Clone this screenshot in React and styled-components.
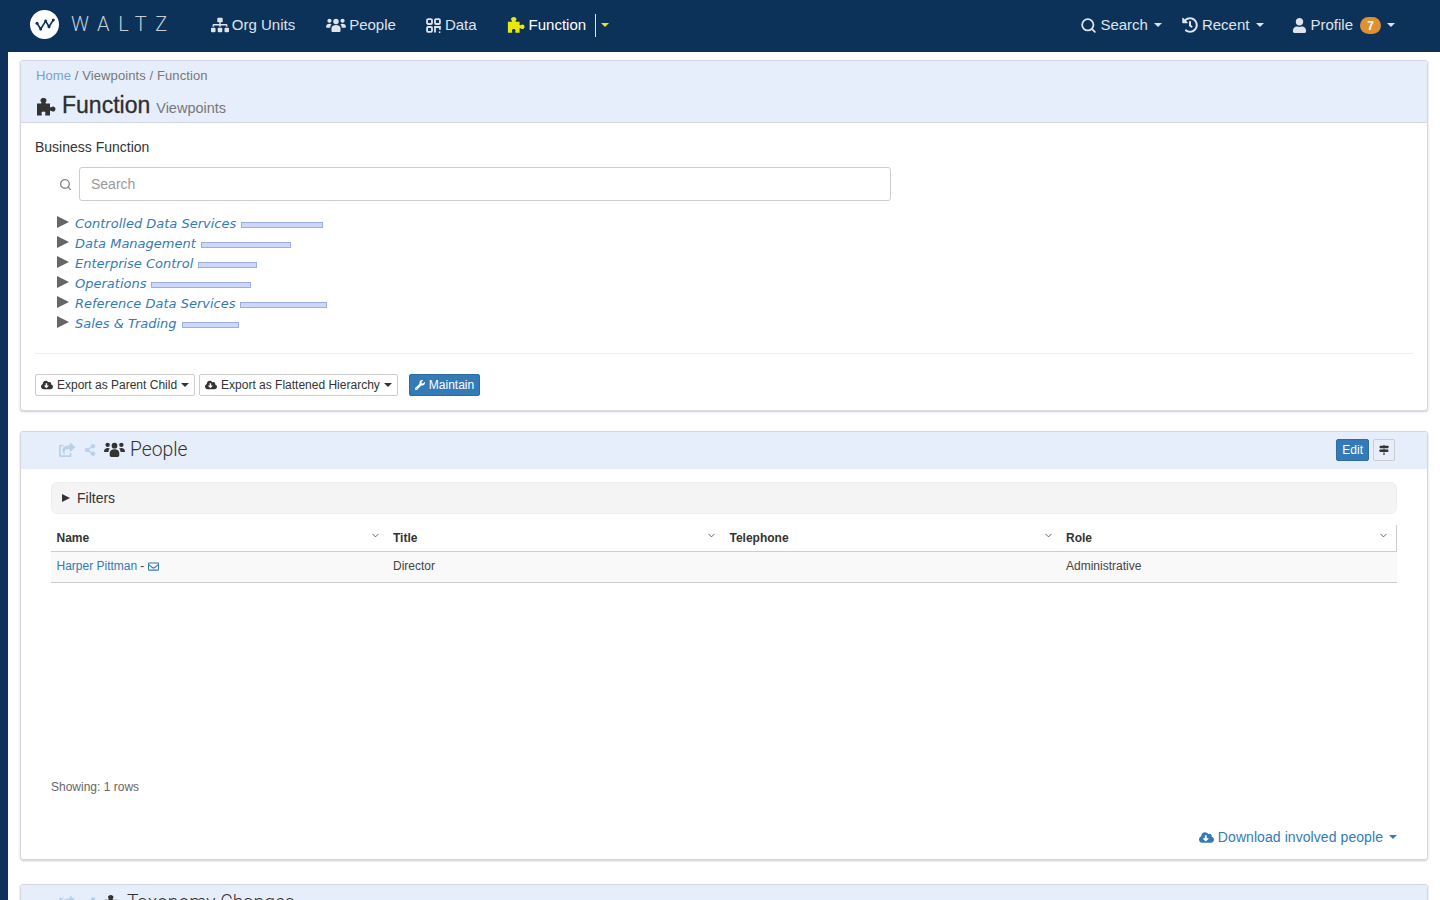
import React from "react";
import styled, { createGlobalStyle } from "styled-components";
import {
  FaSitemap,
  FaHistory,
  FaUser,
  FaCloudDownloadAlt,
  FaWrench,
  FaShareSquare,
  FaShareAlt,
  FaRegEnvelope,
  FaMapSigns,
} from "react-icons/fa";
import { FiSearch, FiChevronDown } from "react-icons/fi";

const GlobalStyle = createGlobalStyle`
  html, body {
    margin: 0;
    padding: 0;
    height: 100%;
    overflow: hidden;
  }
  body {
    font-family: "Liberation Sans", Arial, sans-serif;
    font-size: 14px;
    line-height: 20px;
    color: #333;
  }
  * {
    box-sizing: border-box;
  }
`;

const Page = styled.div`
  width: 1440px;
  height: 900px;
  overflow: hidden;
  background: #0d3259;
  display: flex;
  flex-direction: column;
`;

const Nav = styled.nav`
  height: 52px;
  flex: none;
  display: flex;
  align-items: center;
  justify-content: space-between;
  padding: 0 45px 2px 30px;
  color: #e6ebf0;
`;

const NavGroup = styled.div`
  display: flex;
  align-items: center;
`;

const Logo = styled.div`
  display: flex;
  align-items: center;
  gap: 12px;
  margin: -2px 35px 0 0;
`;

const LogoMark = styled.div`
  width: 29px;
  height: 29px;
  border-radius: 50%;
  background: #fff;
  display: flex;
`;

const LogoText = styled.span`
  font-family: Roboto, "Liberation Sans", sans-serif;
  font-size: 20px;
  font-weight: 300;
  letter-spacing: 8.6px;
  color: #c6ced6;
`;

const NavItem = styled.a`
  display: flex;
  align-items: center;
  gap: ${(p) => p.$gap || 3}px;
  margin-right: ${(p) => p.$after || 0}px;
  font-size: 15px;
  white-space: nowrap;
  color: ${(p) => (p.$active ? "#fff" : "#dfe4ea")};
  svg {
    color: ${(p) => (p.$active ? "#e8e80c" : "#dfe4ea")};
  }
`;

const NavDivider = styled.span`
  width: 1px;
  height: 23px;
  background: #dfe4ea;
  margin: 0 5px 0 9px;
`;

const Caret = styled.span`
  display: inline-block;
  width: 0;
  height: 0;
  border-top: ${(p) => p.$size || 4}px solid ${(p) => p.$color || "currentColor"};
  border-left: ${(p) => p.$size || 4}px solid transparent;
  border-right: ${(p) => p.$size || 4}px solid transparent;
  margin-left: ${(p) => p.$left || 0}px;
`;

const Badge = styled.span`
  width: 21px;
  height: 17px;
  border-radius: 9px;
  background: #dd9133;
  color: #fff;
  font-size: 12px;
  font-weight: bold;
  display: flex;
  align-items: center;
  justify-content: center;
  margin: 1px 3px 0 4px;
`;

const Main = styled.main`
  flex: 1;
  margin-left: 8px;
  background: #fff;
  padding: 8px 12px 0;
  display: flex;
  flex-direction: column;
`;

const Section = styled.section`
  flex: none;
  height: ${(p) => p.$height}px;
  margin-bottom: ${(p) => p.$after || 0}px;
  border: 1px solid #d6d6e0;
  border-radius: 3px;
  box-shadow: 0 1px 2px rgba(60, 60, 80, 0.25);
  background: #fff;
  overflow: hidden;
`;

const PageHeader = styled.header`
  height: 62px;
  background: #e7eefb;
  border-bottom: 1px solid #d6d6e0;
  padding: 5px 15px 0;
`;

const Breadcrumb = styled.div`
  font-size: 13px;
  line-height: 20px;
  letter-spacing: 0.1px;
  color: #777;
  a {
    color: #6fa3d6;
  }
`;

const PageTitle = styled.h1`
  margin: 4px 0 0;
  display: flex;
  align-items: baseline;
  font-size: 23px;
  line-height: 30px;
  font-weight: 400;
  -webkit-text-stroke: 0.3px #333;
  color: #2d2d2d;
  svg {
    margin-right: 6px;
    align-self: center;
    margin-top: 1px;
    color: #333;
  }
  small {
    font-size: 14.5px;
    color: #777;
    margin-left: 6px;
    -webkit-text-stroke: 0;
  }
`;

const PageBody = styled.div`
  padding: 14px 14px 0;
`;

const Label = styled.div`
  font-size: 14px;
  line-height: 20px;
  color: #333;
`;

const SearchRow = styled.div`
  display: flex;
  align-items: center;
  margin: 10px 0 0 24px;
  color: #888;
`;

const SearchInput = styled.input`
  width: 812px;
  height: 34px;
  margin-left: 7px;
  padding: 0 11px;
  border: 1px solid #ccc;
  border-radius: 3px;
  font: 14px "Liberation Sans", Arial, sans-serif;
  color: #555;
  &::placeholder {
    color: #999;
    opacity: 1;
  }
`;

const Tree = styled.ul`
  list-style: none;
  margin: 13px 0 0;
  padding: 0 0 19px 22px;
  border-bottom: 1px solid #eee;
`;

const TreeRow = styled.li`
  height: 20px;
  display: flex;
  align-items: center;
`;

const TreeArrow = styled.span`
  width: 0;
  height: 0;
  border-left: 12px solid #666;
  border-top: 6px solid transparent;
  border-bottom: 6px solid transparent;
  margin: 0 6px 5px 0;
`;

const TreeLink = styled.a`
  font-family: "DejaVu Sans", Verdana, sans-serif;
  font-style: italic;
  font-size: 13px;
  line-height: 20px;
  color: #337ab7;
`;

const TreeBar = styled.span`
  width: ${(p) => p.$width}px;
  height: 6px;
  margin: 2px 0 0 5px;
  background: #cdd8f8;
  border: 1px solid #9aaee0;
`;

const Toolbar = styled.div`
  display: flex;
  align-items: center;
  margin-top: 20px;
`;

const Button = styled.button`
  height: 22px;
  padding: 0 5px;
  display: flex;
  align-items: center;
  gap: 4px;
  border: 1px solid ${(p) => (p.$primary ? "#2e6da4" : "#ccc")};
  border-radius: 2px;
  background: ${(p) => (p.$primary ? "#337ab7" : "transparent")};
  color: ${(p) => (p.$primary ? "#fff" : "#333")};
  font: 12px "Liberation Sans", Arial, sans-serif;
  margin-right: ${(p) => p.$after || 0}px;
  white-space: nowrap;
`;

const SectionHeader = styled.header`
  height: 37px;
  background: #e7eefb;
  display: flex;
  align-items: center;
  justify-content: space-between;
  padding: 0 32px 1px 38px;
`;

const SectionTitle = styled.div`
  display: flex;
  align-items: center;
  font-family: Roboto, "Liberation Sans", sans-serif;
  font-size: 19.3px;
  font-weight: 300;
  color: #333;
`;

const FadedIcon = styled.span`
  display: flex;
  color: #b9d2ea;
  margin-right: ${(p) => p.$after}px;
`;

const DarkIcon = styled.span`
  display: flex;
  color: #333;
  margin-right: 5px;
`;

const HeaderActions = styled.div`
  display: flex;
  gap: 4px;
`;

const SectionBody = styled.div`
  padding: 13px 30px 0;
  height: 390px;
  display: flex;
  flex-direction: column;
`;

const Filters = styled.div`
  height: 32px;
  flex: none;
  display: flex;
  align-items: center;
  padding-left: 10px;
  gap: 7px;
  background: #f4f4f4;
  border: 1px solid #eee;
  border-radius: 6px;
  font-size: 14px;
  color: #333;
`;

const FilterArrow = styled.span`
  width: 0;
  height: 0;
  border-left: 8px solid #333;
  border-top: 4.5px solid transparent;
  border-bottom: 4.5px solid transparent;
`;

const Grid = styled.div`
  display: grid;
  grid-template-columns: repeat(4, 1fr);
  margin-top: 11px;
  font-size: 12px;
`;

const HeadCell = styled.div`
  height: 27px;
  display: flex;
  justify-content: space-between;
  padding: 5px 7px 0 5.5px;
  font-weight: bold;
  line-height: 16px;
  color: #333;
  border-bottom: 1px solid #ccc;
  border-right: ${(p) => (p.$last ? "1px solid #ccc" : "none")};
  svg {
    margin-top: 0;
    color: #555;
  }
`;

const Cell = styled.div`
  height: 31px;
  display: flex;
  align-items: center;
  gap: 3px;
  padding: 0 5.5px 2px;
  background: #f9f9f9;
  border-bottom: 1px solid #ccc;
  color: #444;
  a {
    color: #337ab7;
  }
  svg {
    color: #337ab7;
    margin-left: 1px;
  }
`;

const RowCount = styled.div`
  margin-top: auto;
  font-size: 12px;
  line-height: 16px;
  color: #666;
`;

const Download = styled.a`
  margin: 32px 0 0 auto;
  display: flex;
  align-items: center;
  gap: 4px;
  font-size: 14px;
  letter-spacing: 0.07px;
  color: #337ab7;
  padding-bottom: 12px;
`;

const WaltzMark = () => (
  <svg width="29" height="29" viewBox="0 0 29 29">
    <path
      d="M7 13.3 L10.7 19 L15.7 11 L19 16.7 L23.3 10"
      fill="none"
      stroke="#0d3259"
      strokeWidth="1.6"
    />
    <circle cx="7" cy="13.3" r="1.5" fill="#0d3259" />
    <circle cx="10.7" cy="19" r="1.5" fill="#0d3259" />
    <circle cx="15.7" cy="11" r="1.5" fill="#0d3259" />
    <circle cx="19" cy="16.7" r="1.5" fill="#0d3259" />
    <circle cx="23.3" cy="10" r="1.5" fill="#0d3259" />
  </svg>
);

const PuzzleIcon = ({ size }) => (
  <svg width={size} height={size} viewBox="0 0 20 19" fill="currentColor">
    <path d="M1 6 H5 C5.6 6 5.6 5 5.1 4.5 C3.6 2.6 5 0.5 7.5 0.5 C10 0.5 11.4 2.6 9.9 4.5 C9.4 5 9.4 6 10 6 H14 V9.5 C14 10 15 10 15.5 9.5 C17 8.2 19.5 9.2 19.5 11.5 C19.5 13.8 17 14.8 15.5 13.5 C15 13 14 13 14 13.5 V18 H9.5 C9 18 9 17 9.3 16.5 C10 15 9 14 7.5 14 C6 14 5 15 5.7 16.5 C6 17 6 18 5.5 18 H1 Z" />
  </svg>
);

const UsersIcon = ({ size }) => (
  <svg width={size} height={(size * 16) / 22} viewBox="0 0 22 16" fill="currentColor">
    <circle cx="11" cy="3.8" r="3" />
    <circle cx="3.8" cy="3" r="2.3" />
    <circle cx="18.2" cy="3" r="2.3" />
    <path d="M0 10 C0 7.4 1.6 6.2 3.8 6.2 C4.8 6.2 5.6 6.4 6.2 6.9 C5.2 7.8 4.7 9 4.7 10.6 H1 C0.4 10.6 0 10.4 0 10 Z" />
    <path d="M22 10 C22 7.4 20.4 6.2 18.2 6.2 C17.2 6.2 16.4 6.4 15.8 6.9 C16.8 7.8 17.3 9 17.3 10.6 H21 C21.6 10.6 22 10.4 22 10 Z" />
    <path d="M6 11.5 C6 9 8 7.6 11 7.6 C14 7.6 16 9 16 11.5 V14 C16 15 15.4 15.6 14.4 15.6 H7.6 C6.6 15.6 6 15 6 14 Z" />
  </svg>
);

const DataIcon = ({ size }) => (
  <svg width={size} height={size} viewBox="0 0 14 14" fill="none" stroke="currentColor" strokeWidth="1.7">
    <rect x="1" y="1" width="4.6" height="4.6" rx="1" />
    <rect x="8.4" y="1" width="4.6" height="4.6" rx="1" />
    <rect x="1" y="8.4" width="4.6" height="4.6" rx="1" />
    <path d="M8.4 13.5 V8.4 H13 V11" />
    <path d="M12 13.4 H13.4" />
  </svg>
);

const treeItems = [
  { name: "Controlled Data Services", bar: 82 },
  { name: "Data Management", bar: 90 },
  { name: "Enterprise Control", bar: 59 },
  { name: "Operations", bar: 100 },
  { name: "Reference Data Services", bar: 87 },
  { name: "Sales & Trading", bar: 57 },
];

const columns = ["Name", "Title", "Telephone", "Role"];

export default function App() {
  return (
    <Page>
      <GlobalStyle />
      <Nav>
        <NavGroup>
          <Logo>
            <LogoMark>
              <WaltzMark />
            </LogoMark>
            <LogoText>WALTZ</LogoText>
          </Logo>
          <NavItem $after={31}>
            <FaSitemap size={18} />
            Org Units
          </NavItem>
          <NavItem $after={30}>
            <UsersIcon size={20} />
            People
          </NavItem>
          <NavItem $after={30} $gap={4}>
            <DataIcon size={15} />
            Data
          </NavItem>
          <NavItem $active $gap={4}>
            <PuzzleIcon size={18} />
            Function
          </NavItem>
          <NavDivider />
          <Caret $color="#e8e80c" $size={4.5} />
        </NavGroup>
        <NavGroup>
          <NavItem $after={20}>
            <FiSearch size={17} strokeWidth={2.5} />
            Search
            <Caret $left={3} />
          </NavItem>
          <NavItem $after={28} $gap={4}>
            <FaHistory size={16} />
            Recent
            <Caret $left={3} />
          </NavItem>
          <NavItem>
            <FaUser size={15} />
            Profile
            <Badge>7</Badge>
            <Caret />
          </NavItem>
        </NavGroup>
      </Nav>
      <Main>
        <Section $height={351} $after={20}>
          <PageHeader>
            <Breadcrumb>
              <a>Home</a> / Viewpoints / Function
            </Breadcrumb>
            <PageTitle>
              <PuzzleIcon size={20} />
              Function <small>Viewpoints</small>
            </PageTitle>
          </PageHeader>
          <PageBody>
            <Label>Business Function</Label>
            <SearchRow>
              <FiSearch size={13} strokeWidth={2.5} />
              <SearchInput placeholder="Search" />
            </SearchRow>
            <Tree>
              {treeItems.map((item) => (
                <TreeRow key={item.name}>
                  <TreeArrow />
                  <TreeLink>{item.name}</TreeLink>
                  <TreeBar $width={item.bar} />
                </TreeRow>
              ))}
            </Tree>
            <Toolbar>
              <Button $after={4}>
                <FaCloudDownloadAlt size={12} />
                Export as Parent Child
                <Caret />
              </Button>
              <Button $after={11}>
                <FaCloudDownloadAlt size={12} />
                Export as Flattened Hierarchy
                <Caret />
              </Button>
              <Button $primary>
                <FaWrench size={10} />
                Maintain
              </Button>
            </Toolbar>
          </PageBody>
        </Section>
        <Section $height={429} $after={24}>
          <SectionHeader>
            <SectionTitle>
              <FadedIcon $after={9}>
                <FaShareSquare size={16} />
              </FadedIcon>
              <FadedIcon $after={8}>
                <FaShareAlt size={12} />
              </FadedIcon>
              <DarkIcon>
                <UsersIcon size={21} />
              </DarkIcon>
              People
            </SectionTitle>
            <HeaderActions>
              <Button $primary>Edit</Button>
              <Button>
                <FaMapSigns size={10} />
              </Button>
            </HeaderActions>
          </SectionHeader>
          <SectionBody>
            <Filters>
              <FilterArrow />
              Filters
            </Filters>
            <Grid>
              {columns.map((col, i) => (
                <HeadCell key={col} $last={i === columns.length - 1}>
                  {col}
                  <FiChevronDown size={11} />
                </HeadCell>
              ))}
              <Cell>
                <a>Harper Pittman</a> - <FaRegEnvelope size={11} />
              </Cell>
              <Cell>Director</Cell>
              <Cell />
              <Cell>Administrative</Cell>
            </Grid>
            <RowCount>Showing: 1 rows</RowCount>
            <Download>
              <FaCloudDownloadAlt size={15} />
              Download involved people
              <Caret $left={2} />
            </Download>
          </SectionBody>
        </Section>
        <Section $height={60}>
          <SectionHeader>
            <SectionTitle>
              <FadedIcon $after={9}>
                <FaShareSquare size={16} />
              </FadedIcon>
              <FadedIcon $after={8}>
                <FaShareAlt size={12} />
              </FadedIcon>
              <DarkIcon>
                <PuzzleIcon size={18} />
              </DarkIcon>
              Taxonomy Changes
            </SectionTitle>
          </SectionHeader>
        </Section>
      </Main>
    </Page>
  );
}
